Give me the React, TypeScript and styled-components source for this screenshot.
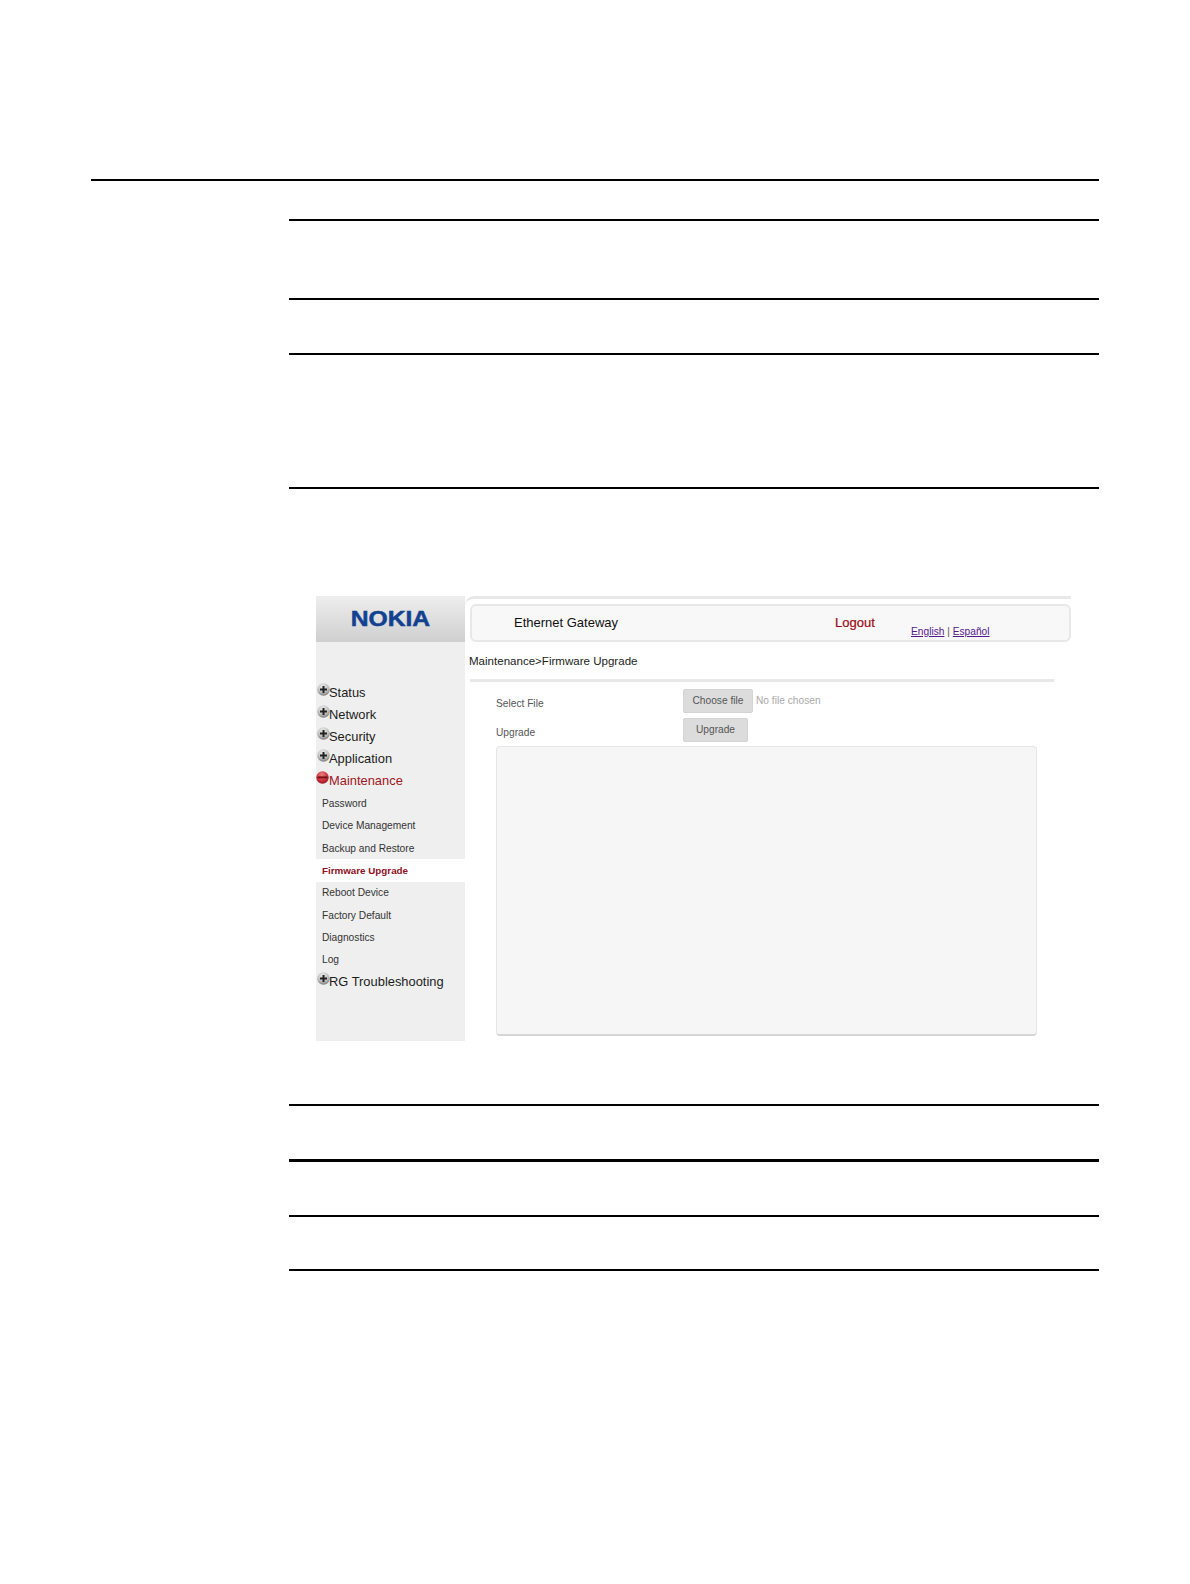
import React from "react";
import styled, {createGlobalStyle} from "styled-components";

const GlobalStyle = createGlobalStyle`
  html, body {
    margin: 0;
    padding: 0;
    background-color: #fff;
  }
`;

const Page = styled.div`
  width: 1190px;
  height: 1584px;
  padding: 179px 91px 0 91px;
  box-sizing: border-box;
  font-family: "Liberation Sans", Arial, sans-serif;
  color: #222;
  overflow: hidden;
`;

const Rule = styled.div<{$gap?: number; $inset?: boolean; $thick?: boolean}>`
  height: ${(props) => (props.$thick ? 3 : 2)}px;
  margin-top: ${(props) => props.$gap || 0}px;
  margin-left: ${(props) => (props.$inset ? 198 : 0)}px;
  background-color: #000;
`;

const Shot = styled.div`
  display: grid;
  grid-template-columns: 149px 606px;
  height: 445px;
  margin: 107px 0 0 225px;
`;

const Sidebar = styled.nav`
  background-color: #efefef;
`;

const LogoBar = styled.div`
  height: 46px;
  display: flex;
  align-items: center;
  justify-content: center;
  background: linear-gradient(#eeeeee, #cfcfcf);
`;

const Logo = styled.span`
  font-size: 22px;
  font-weight: 700;
  color: #124191;
  -webkit-text-stroke: 0.5px #124191;
  transform: scaleX(1.12);
`;

const Menu = styled.ul`
  list-style: none;
  margin: 0;
  padding: 39px 0 0 0;
`;

const TopItem = styled.li<{$open?: boolean}>`
  height: 22.1px;
  display: flex;
  align-items: center;
  padding-left: ${(props) => (props.$open ? 0 : 1)}px;
  margin-bottom: ${(props) => (props.$open ? 1 : 0)}px;
  font-size: 12.9px;
  color: ${(props) => (props.$open ? "#a11523" : "#1c1c1c")};

  svg {
    margin: -6px ${(props) => (props.$open ? 0 : -1)}px 0 0;
    flex: none;
  }
`;

const SubItem = styled.li<{$active?: boolean}>`
  height: 22.3px;
  display: flex;
  align-items: center;
  padding-left: 6px;
  font-size: ${(props) => (props.$active ? 9.8 : 10.2)}px;
  font-weight: ${(props) => (props.$active ? 700 : 400)};
  color: ${(props) => (props.$active ? "#8e1022" : "#333")};
  background-color: ${(props) => (props.$active ? "#fff" : "transparent")};
`;

const Main = styled.main`
  border-top: 3px solid #e8e8e8;
  border-top-left-radius: 9px;
  padding: 5px 0 0 5px;
  min-width: 0;
`;

const HeaderBox = styled.header`
  height: 38px;
  box-sizing: border-box;
  display: grid;
  grid-template-columns: 321px 76px 1fr;
  padding-left: 42px;
  background-color: #f8f8f8;
  border: 2px solid #e8e8e8;
  border-radius: 6px;
`;

const Title = styled.span`
  align-self: center;
  margin-bottom: 2px;
  font-size: 13px;
  color: #111;
`;

const Logout = styled.span`
  align-self: center;
  margin-bottom: 2px;
  font-size: 13px;
  color: #9c0a14;
  -webkit-text-stroke: 0.2px #9c0a14;
`;

const Languages = styled.div`
  align-self: end;
  padding-bottom: 3px;
  font-size: 10.2px;
  color: #555;
`;

const LangLink = styled.a`
  color: #551a8b;
  text-decoration: underline;
`;

const Breadcrumb = styled.div`
  margin: 12px 0 0 -1px;
  height: 14px;
  line-height: 14px;
  font-size: 11.55px;
  color: #222;
`;

const Divider = styled.div`
  height: 3px;
  margin: 11px 17px 0 0;
  background-color: #e8e8e8;
`;

const Form = styled.div`
  display: grid;
  grid-template-columns: 187px 1fr;
  grid-auto-rows: auto;
  row-gap: 5px;
  padding: 7px 34px 0 26px;
`;

const Label = styled.span`
  padding-top: 9px;
  font-size: 10.2px;
  color: #555;
`;

const Controls = styled.div`
  display: flex;
  align-items: center;
  gap: 3px;
`;

const GreyButton = styled.button<{$width: number}>`
  width: ${(props) => props.$width}px;
  height: 24px;
  padding: 0 0 1px 0;
  border: 1px solid #d4d4d4;
  border-radius: 2px;
  background-color: #dcdcdc;
  font-family: inherit;
  font-size: 10.2px;
  color: #555;
`;

const NoFile = styled.span`
  font-size: 10.2px;
  color: #aaa;
  margin-bottom: 1px;
`;

const Panel = styled.div`
  grid-column: 1 / -1;
  height: 290px;
  margin-top: -1px;
  box-sizing: border-box;
  background-color: #f6f6f6;
  border: 1px solid #e6e6e6;
  border-bottom: 2px solid #d6d6d6;
  border-radius: 4px;
`;

const MenuIcon = ({open}: {open?: boolean}) => {
    const id = open ? "ballRed" : "ballGrey";
    return (
        <svg width="13" height="13" viewBox="0 0 13 13">
            <defs>
                <radialGradient id={id} cx="45%" cy="28%" r="78%">
                    <stop offset="0%" stopColor={open ? "#e88080" : "#eeeeee"}/>
                    <stop offset="60%" stopColor={open ? "#c9303a" : "#bcbcbc"}/>
                    <stop offset="100%" stopColor={open ? "#8e1420" : "#6e6e6e"}/>
                </radialGradient>
            </defs>
            <circle cx="6.5" cy="6.5" r="6.2" fill={`url(#${id})`}/>
            {open
                ? <rect x="1.5" y="5.4" width="10" height="2" fill="#7d1019"/>
                : <path d="M5.5 3h2v2.5H10v2H7.5V10h-2V7.5H3v-2h2.5z" fill="#222"/>}
        </svg>
    );
};

const App = () => {
    return (
        <Page>
            <GlobalStyle/>
            <Rule/>
            <Rule $inset $gap={38}/>
            <Rule $inset $gap={77}/>
            <Rule $inset $gap={53}/>
            <Rule $inset $gap={132}/>
            <Shot>
                <Sidebar>
                    <LogoBar><Logo>NOKIA</Logo></LogoBar>
                    <Menu>
                        <TopItem><MenuIcon/>Status</TopItem>
                        <TopItem><MenuIcon/>Network</TopItem>
                        <TopItem><MenuIcon/>Security</TopItem>
                        <TopItem><MenuIcon/>Application</TopItem>
                        <TopItem $open><MenuIcon open/>Maintenance</TopItem>
                        <SubItem>Password</SubItem>
                        <SubItem>Device Management</SubItem>
                        <SubItem>Backup and Restore</SubItem>
                        <SubItem $active>Firmware Upgrade</SubItem>
                        <SubItem>Reboot Device</SubItem>
                        <SubItem>Factory Default</SubItem>
                        <SubItem>Diagnostics</SubItem>
                        <SubItem>Log</SubItem>
                        <TopItem><MenuIcon/>RG Troubleshooting</TopItem>
                    </Menu>
                </Sidebar>
                <Main>
                    <HeaderBox>
                        <Title>Ethernet Gateway</Title>
                        <Logout>Logout</Logout>
                        <Languages>
                            <LangLink>English</LangLink> | <LangLink>Español</LangLink>
                        </Languages>
                    </HeaderBox>
                    <Breadcrumb>Maintenance&gt;Firmware Upgrade</Breadcrumb>
                    <Divider/>
                    <Form>
                        <Label>Select File</Label>
                        <Controls>
                            <GreyButton $width={70}>Choose file</GreyButton>
                            <NoFile>No file chosen</NoFile>
                        </Controls>
                        <Label>Upgrade</Label>
                        <Controls>
                            <GreyButton $width={65}>Upgrade</GreyButton>
                        </Controls>
                        <Panel/>
                    </Form>
                </Main>
            </Shot>
            <Rule $inset $gap={63}/>
            <Rule $inset $thick $gap={53}/>
            <Rule $inset $gap={53}/>
            <Rule $inset $gap={52}/>
        </Page>
    );
};

export default App;
